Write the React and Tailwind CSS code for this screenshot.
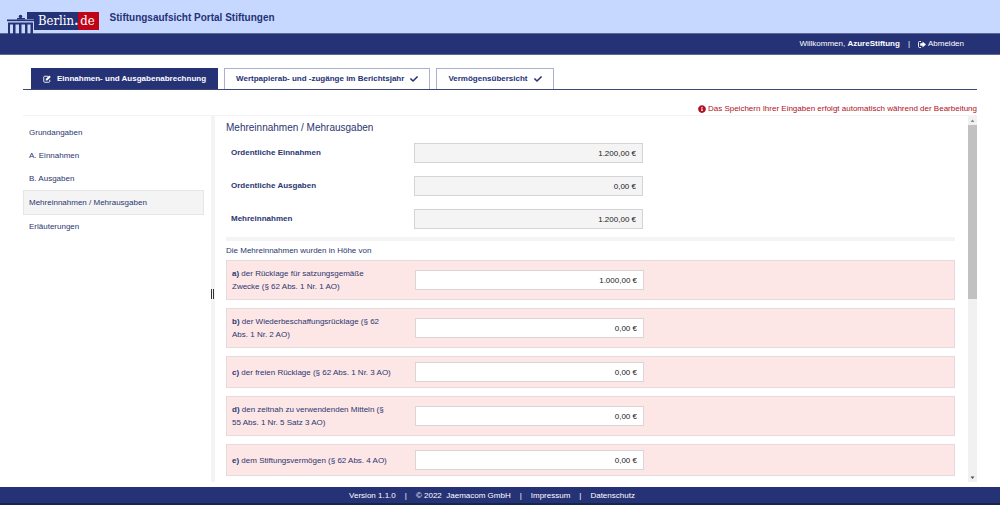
import React, { useState } from 'react';
import { FaCheck, FaInfoCircle } from 'react-icons/fa';

const tabs = [
  { id: 'abrechnung', label: 'Einnahmen- und Ausgabenabrechnung' },
  { id: 'wertpapiere', label: 'Wertpapierab- und -zugänge im Berichtsjahr', done: true },
  { id: 'vermoegen', label: 'Vermögensübersicht', done: true },
];

const sections = [
  'Grundangaben',
  'A. Einnahmen',
  'B. Ausgaben',
  'Mehreinnahmen / Mehrausgaben',
  'Erläuterungen',
];

const totals = [
  { id: 'einnahmen', label: 'Ordentliche Einnahmen', value: '1.200,00 €' },
  { id: 'ausgaben', label: 'Ordentliche Ausgaben', value: '0,00 €' },
  { id: 'mehreinnahmen', label: 'Mehreinnahmen', value: '1.200,00 €' },
];

const allocations = [
  { id: 'a', label: 'der Rücklage für satzungsgemäße Zwecke (§ 62 Abs. 1 Nr. 1 AO)', value: '1.000,00 €' },
  { id: 'b', label: 'der Wiederbeschaffungsrücklage (§ 62 Abs. 1 Nr. 2 AO)', value: '0,00 €' },
  { id: 'c', label: 'der freien Rücklage (§ 62 Abs. 1 Nr. 3 AO)', value: '0,00 €' },
  { id: 'd', label: 'den zeitnah zu verwendenden Mitteln (§ 55 Abs. 1 Nr. 5 Satz 3 AO)', value: '0,00 €' },
  { id: 'e', label: 'dem Stiftungsvermögen (§ 62 Abs. 4 AO)', value: '0,00 €' },
];

const EditIcon = () => (
  <svg viewBox="0 0 16 16" className="h-2 w-2" fill="none" stroke="currentColor" strokeWidth="1.8">
    <path d="M10 2.5H3.2C2.2 2.5 1.5 3.2 1.5 4.2v8.6c0 1 .7 1.7 1.7 1.7h8.6c1 0 1.7-.7 1.7-1.7V9.5" />
    <path d="M5.500 11V8l7-7L15.500 4l-7 7z" fill="currentColor" stroke="none" />
  </svg>
);

const SignOutIcon = () => (
  <svg viewBox="0 0 16 14" className="h-[7px] w-2" fill="currentColor">
    <path d="M6 1H3a2 2 0 0 0-2 2v8a2 2 0 0 0 2 2h3" fill="none" stroke="currentColor" strokeWidth="1.8" />
    <path d="M9 1L16 7 9 13V9.500H4.500v-5H9z" />
  </svg>
);

const Logo = () => (
  <a href="#" className="flex items-start">
    {/* Brandenburg Gate, its roof reaches into the name box */}
    <svg viewBox="0 0 27 22" className="h-[22px] w-[27px]" fill="#253276">
      <rect x="20" y="0" width="7" height="7" />
      <circle cx="13.500" cy="4.500" r="1.800" />
      <rect x="10" y="6" width="8" height="1.500" />
      <rect x="0" y="7.500" width="27" height="1.700" />
      <rect x="1" y="10.500" width="25" height="2" />
      <rect x="1" y="12" width="2" height="10" />
      <rect x="6" y="12" width="2.500" height="10" />
      <rect x="12" y="12" width="2.500" height="10" />
      <rect x="18" y="12" width="2.500" height="10" />
      <rect x="23.500" y="12" width="2.500" height="10" />
    </svg>
    <span className="flex h-[18px] items-center bg-[#253276] pl-1 font-['DejaVu_Serif_Condensed','DejaVu_Serif',serif] text-[13px] leading-[18px] text-white">
      Berlin<b>.</b>
    </span>
    <span className="flex h-[18px] items-center bg-[#c00418] pr-1 pl-0.5 font-['DejaVu_Serif_Condensed','DejaVu_Serif',serif] text-[13px] leading-[18px] text-white">
      de
    </span>
  </a>
);

const TotalRow = ({ id, label, value }) => (
  <div className="grid grid-cols-[188fr_229fr_312fr] items-center">
    <label htmlFor={id} className="pl-[5px] font-bold">{label}</label>
    <input
      id={id}
      readOnly
      value={value}
      className="h-5 w-full border border-[#d4d4d6] bg-[#f4f4f4] px-1.5 text-right text-[#222]"
    />
  </div>
);

const AllocationRow = ({ id, label, initial }) => {
  const [value, setValue] = useState(initial);
  return (
    <div className="grid grid-cols-[188fr_229fr_310fr] items-center border border-[#e8d9dd] bg-[#fde6e6] py-1">
      <label htmlFor={id} className="py-0.5 pr-[23px] pl-[5px] leading-[13px]">
        <b>{id})</b> {label}
      </label>
      <input
        id={id}
        value={value}
        onChange={(e) => setValue(e.target.value)}
        className="my-px h-5 w-full border border-[#dcd5d8] bg-white px-1.5 text-right text-[#222]"
      />
    </div>
  );
};

const App = () => {
  const [tab, setTab] = useState('abrechnung');
  const [section, setSection] = useState('Mehreinnahmen / Mehrausgaben');

  return (
    <div className="flex min-h-screen flex-col bg-white font-['Liberation_Sans',Arial,sans-serif] text-[8px] leading-3 text-[#2b3670]">
      <header>
        <div className="flex h-[33px] items-start gap-[11px] bg-[#c6d8ff] pt-3 pl-[7px]">
          <Logo />
          <h1 className="text-[10px] leading-3 font-bold text-[#253276]">Stiftungsaufsicht Portal Stiftungen</h1>
        </div>
        <div className="flex h-[22px] items-center justify-end border-y border-[#5c6794] bg-[#253276] pr-9 text-white">
          <span>Willkommen, <b>AzureStiftung</b></span>
          <span className="px-2">|</span>
          <button type="button" className="flex cursor-pointer items-center gap-0.5">
            <SignOutIcon /> Abmelden
          </button>
        </div>
      </header>

      <div className="flex flex-1 flex-col px-[23px] pt-[13px]">
        <nav className="flex items-end gap-1.5 border-b border-[#3d4878] px-2">
          {tabs.map((t) => (
            <button
              key={t.id}
              type="button"
              onClick={() => setTab(t.id)}
              className={`flex h-[21px] cursor-pointer items-center gap-1.5 border border-b-0 px-[11px] font-bold ${
                tab === t.id ? 'border-[#253276] bg-[#253276] text-white' : 'border-[#aab1d0] bg-white text-[#253276]'
              }`}
            >
              {!t.done && <EditIcon />}
              {t.label}
              {t.done && <FaCheck className="h-2 w-2" />}
            </button>
          ))}
        </nav>

        <p className="flex items-center justify-end gap-0.5 pt-[13px] text-[#b01022]">
          <FaInfoCircle className="h-2 w-2" />
          Das Speichern Ihrer Eingaben erfolgt automatisch während der Bearbeitung
        </p>

        <div className="flex flex-1 border-t border-[#f3f3f5]">
          <nav className="flex w-[188px] flex-col pt-[5px] pr-[7px]">
            {sections.map((s) => (
              <a
                key={s}
                href="#"
                onClick={() => setSection(s)}
                className={`px-[5px] leading-[23px] ${section === s ? 'border border-[#e6e6ea] bg-[#f4f4f4]' : 'border-x border-transparent'}`}
              >
                {s}
              </a>
            ))}
          </nav>
          <div className="flex w-1 items-center bg-[#f4f4f4] pb-2.5">
            <span className="h-2.5 w-[3px] border-x border-[#333]" />
          </div>

          <main className="flex-1 pt-1.5 pr-[13px] pb-1.5 pl-[11px]">
            <h2 className="text-[10px] leading-3">Mehreinnahmen / Mehrausgaben</h2>
            <div className="flex flex-col gap-[13px] pt-[9px] pb-2">
              {totals.map((t) => (
                <TotalRow key={t.id} {...t} />
              ))}
            </div>
            <hr className="h-1 border-0 bg-[#f4f4f4]" />
            <p className="pt-1 pb-[3px]">Die Mehreinnahmen wurden in Höhe von</p>
            <div className="flex flex-col gap-2">
              {allocations.map((a) => (
                <AllocationRow key={a.id} id={a.id} label={a.label} initial={a.value} />
              ))}
            </div>
          </main>

          <div className="flex w-[9px] flex-col bg-[#f1f1f1]">
            <svg viewBox="0 0 9 9" className="h-[9px] w-[9px]" fill="#8a8a8a">
              <path d="M2.500 6L4.500 3.500 6.500 6z" />
            </svg>
            <div className="flex flex-1 flex-col">
              <div className="basis-1/2 bg-[#c1c1c1]" />
            </div>
            <svg viewBox="0 0 9 9" className="h-[9px] w-[9px]" fill="#505050">
              <path d="M2.500 3.500L4.500 6 6.500 3.500z" />
            </svg>
          </div>
        </div>
      </div>

      <footer className="mt-[5px] flex h-[18px] items-center justify-center gap-[9px] border-b-2 border-[#14264e] bg-[#253276] pt-0.5 pr-4 text-white">
        <span>Version 1.1.0</span>
        <span>|</span>
        <span>© 2022&nbsp; Jaemacom GmbH</span>
        <span>|</span>
        <a href="#">Impressum</a>
        <span>|</span>
        <a href="#">Datenschutz</a>
      </footer>
    </div>
  );
};

export default App;
